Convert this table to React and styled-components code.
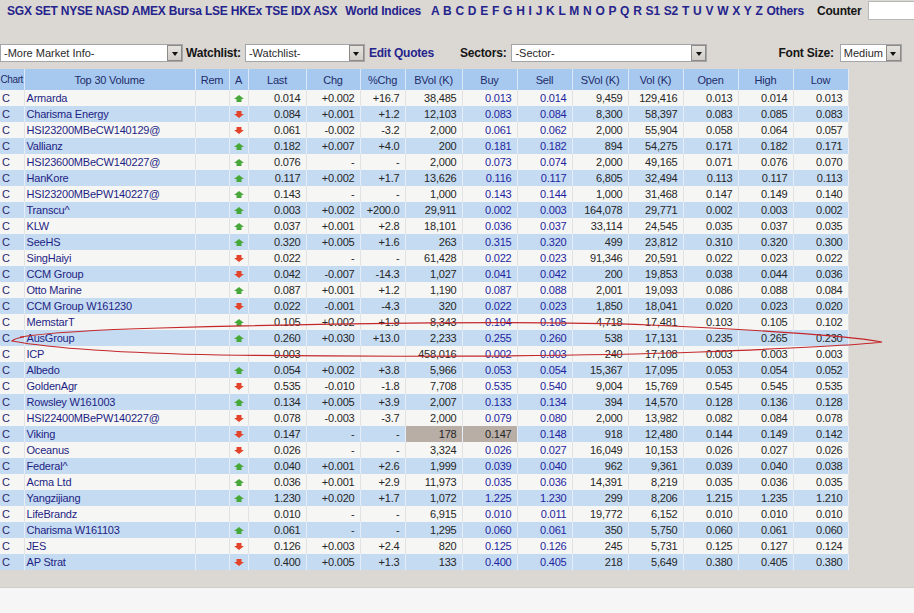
import React from 'react';
import styled, { createGlobalStyle } from 'styled-components';

const Global = createGlobalStyle`
  html, body { margin: 0; padding: 0; background: #f6f6f6; }
  body { font-family: "Liberation Sans", Arial, sans-serif; }
`;

const Page = styled.div`
  position: relative;
  width: 914px;
  height: 613px;
  overflow: hidden;
  display: flex;
  flex-direction: column;
`;

const Main = styled.div`
  background: #dbd7d3;
  height: 587px;
  flex-shrink: 0;
  display: flex;
  flex-direction: column;
`;

const Footer = styled.div`
  flex: 1;
  background: #f6f6f6;
  border-top: 1px solid #d0ccc8;
`;

const NavBar = styled.div`
  display: flex;
  align-items: center;
  height: 21px;
  padding-left: 7px;
  font-size: 12px;
  font-weight: bold;
  letter-spacing: -0.2px;
  white-space: nowrap;
  overflow: hidden;
`;

const NavGroup = styled.div`
  flex-shrink: 0;
  margin-left: ${p => p.$ml || 0}px;
  word-spacing: ${p => p.$ws || 0}px;
`;

const NavLink = styled.span`
  color: #24248c;
`;

const CounterLabel = styled.span`
  flex-shrink: 0;
  margin-left: 13px;
  color: #151515;
`;

const CounterInput = styled.div`
  flex-shrink: 0;
  margin-left: 6px;
  width: 60px;
  height: 17px;
  background: #fff;
  border: 1px solid #b8b8b8;
`;

const Toolbar = styled.div`
  display: flex;
  align-items: center;
  height: 18px;
  margin-top: 23px;
  white-space: nowrap;
`;

const SelectBox = styled.div`
  flex-shrink: 0;
  display: flex;
  align-items: stretch;
  width: ${p => p.$w}px;
  height: 18px;
  box-sizing: border-box;
  margin-left: ${p => p.$ml || 0}px;
  background: #fff;
  border: 1px solid #a2a6ab;
`;

const SelectText = styled.div`
  flex: 1;
  font-size: 11px;
  line-height: 16px;
  padding-left: 3px;
  color: #2a2a2a;
  overflow: hidden;
`;

const DropButton = styled.div`
  width: 15px;
  box-sizing: border-box;
  background: linear-gradient(#e6e4e0, #cfccc7);
  border: 1px solid #8d8a86;
  display: flex;
  align-items: center;
  justify-content: center;
  &::after {
    content: "";
    border-left: 3.5px solid transparent;
    border-right: 3.5px solid transparent;
    border-top: 4px solid #111;
    margin-top: 1px;
  }
`;

const Label = styled.span`
  flex-shrink: 0;
  margin-left: ${p => p.$ml || 0}px;
  font-size: 12px;
  font-weight: bold;
  letter-spacing: -0.2px;
  color: ${p => (p.$link ? '#24248c' : '#151515')};
`;

const Table = styled.table`
  margin-top: 7px;
  width: 848px;
  border-collapse: collapse;
  table-layout: fixed;
  font-size: 11px;
  letter-spacing: -0.2px;
`;

const Th = styled.th`
  height: 21px;
  padding: 0;
  background: #a7c9f0;
  color: #1e2c68;
  font-weight: normal;
  text-align: center;
  border-right: 1px solid #dce8f6;
  white-space: nowrap;
  overflow: hidden;
  font-size: ${p => (p.$tight ? '10px' : '11px')};
  letter-spacing: ${p => (p.$tight ? '-0.4px' : '-0.2px')};
`;

const Tr = styled.tr`
  background: ${p => (p.$alt ? '#c5dbf2' : '#f6f6f4')};
`;

const Td = styled.td`
  height: 16px;
  line-height: 16px;
  padding: 0 ${p => (p.$align === 'right' ? '5px' : '0')} 0 ${p => (p.$align === 'left' ? '2px' : '0')};
  text-align: ${p => p.$align || 'right'};
  white-space: nowrap;
  overflow: hidden;
  color: ${p => p.$color || '#262626'};
  background: ${p => (p.$hl ? '#b9aea6' : 'transparent')};
  border-right: 1px solid ${p => (p.$alt ? '#e4edf8' : '#e2e2e2')};
`;

const ArrowCell = styled.td`
  height: 16px;
  padding: 0;
  text-align: center;
  vertical-align: middle;
  border-right: 1px solid ${p => (p.$alt ? '#e4edf8' : '#e2e2e2')};
  svg { display: block; margin: 0 auto; }
`;

const Overlay = styled.svg`
  position: absolute;
  left: 0;
  top: 0;
  pointer-events: none;
`;

const Arrow = ({ dir }) =>
  dir === 'u' ? (
    <svg width="10" height="7" viewBox="0 0 10 7">
      <polygon points="5,0 10,4 7.5,4 7.5,7 2.5,7 2.5,4 0,4" fill="#47a83a" />
    </svg>
  ) : (
    <svg width="10" height="7" viewBox="0 0 10 7">
      <polygon points="2.5,0 7.5,0 7.5,3 10,3 5,7 0,3 2.5,3" fill="#e3432a" />
    </svg>
  );

const navMain = ['SGX', 'SET', 'NYSE', 'NASD', 'AMEX', 'Bursa', 'LSE', 'HKEx', 'TSE', 'IDX', 'ASX'];
const letters = ['A','B','C','D','E','F','G','H','I','J','K','L','M','N','O','P','Q','R','S1','S2','T','U','V','W','X','Y','Z','Others'];

const cols = [
  { h: 'Chart', w: 24 },
  { h: 'Top 30 Volume', w: 171 },
  { h: 'Rem', w: 34 },
  { h: 'A', w: 19 },
  { h: 'Last', w: 58 },
  { h: 'Chg', w: 54 },
  { h: '%Chg', w: 45 },
  { h: 'BVol (K)', w: 57 },
  { h: 'Buy', w: 55 },
  { h: 'Sell', w: 55 },
  { h: 'SVol (K)', w: 56 },
  { h: 'Vol (K)', w: 55 },
  { h: 'Open', w: 55 },
  { h: 'High', w: 55 },
  { h: 'Low', w: 55 },
];

const rows = [
  ['Armarda','u','0.014','+0.002','+16.7','38,485','0.013','0.014','9,459','129,416','0.013','0.014','0.013'],
  ['Charisma Energy','d','0.084','+0.001','+1.2','12,103','0.083','0.084','8,300','58,397','0.083','0.085','0.083'],
  ['HSI23200MBeCW140129@','d','0.061','-0.002','-3.2','2,000','0.061','0.062','2,000','55,904','0.058','0.064','0.057'],
  ['Vallianz','u','0.182','+0.007','+4.0','200','0.181','0.182','894','54,275','0.171','0.182','0.171'],
  ['HSI23600MBeCW140227@','u','0.076','-','-','2,000','0.073','0.074','2,000','49,165','0.071','0.076','0.070'],
  ['HanKore','u','0.117','+0.002','+1.7','13,626','0.116','0.117','6,805','32,494','0.113','0.117','0.113'],
  ['HSI23200MBePW140227@','u','0.143','-','-','1,000','0.143','0.144','1,000','31,468','0.147','0.149','0.140'],
  ['Transcu^','u','0.003','+0.002','+200.0','29,911','0.002','0.003','164,078','29,771','0.002','0.003','0.002'],
  ['KLW','u','0.037','+0.001','+2.8','18,101','0.036','0.037','33,114','24,545','0.035','0.037','0.035'],
  ['SeeHS','u','0.320','+0.005','+1.6','263','0.315','0.320','499','23,812','0.310','0.320','0.300'],
  ['SingHaiyi','d','0.022','-','-','61,428','0.022','0.023','91,346','20,591','0.022','0.023','0.022'],
  ['CCM Group','d','0.042','-0.007','-14.3','1,027','0.041','0.042','200','19,853','0.038','0.044','0.036'],
  ['Otto Marine','u','0.087','+0.001','+1.2','1,190','0.087','0.088','2,001','19,093','0.086','0.088','0.084'],
  ['CCM Group W161230','d','0.022','-0.001','-4.3','320','0.022','0.023','1,850','18,041','0.020','0.023','0.020'],
  ['MemstarT','u','0.105','+0.002','+1.9','8,343','0.104','0.105','4,718','17,481','0.103','0.105','0.102'],
  ['AusGroup','u','0.260','+0.030','+13.0','2,233','0.255','0.260','538','17,131','0.235','0.265','0.230'],
  ['ICP','','0.003','','','458,016','0.002','0.003','240','17,108','0.003','0.003','0.003'],
  ['Albedo','u','0.054','+0.002','+3.8','5,966','0.053','0.054','15,367','17,095','0.053','0.054','0.052'],
  ['GoldenAgr','d','0.535','-0.010','-1.8','7,708','0.535','0.540','9,004','15,769','0.545','0.545','0.535'],
  ['Rowsley W161003','u','0.134','+0.005','+3.9','2,007','0.133','0.134','394','14,570','0.128','0.136','0.128'],
  ['HSI22400MBePW140227@','d','0.078','-0.003','-3.7','2,000','0.079','0.080','2,000','13,982','0.082','0.084','0.078'],
  ['Viking','d','0.147','-','-','178','0.147','0.148','918','12,480','0.144','0.149','0.142', true],
  ['Oceanus','d','0.026','-','-','3,324','0.026','0.027','16,049','10,153','0.026','0.027','0.026'],
  ['Federal^','u','0.040','+0.001','+2.6','1,999','0.039','0.040','962','9,361','0.039','0.040','0.038'],
  ['Acma Ltd','u','0.036','+0.001','+2.9','11,973','0.035','0.036','14,391','8,219','0.035','0.036','0.035'],
  ['Yangzijiang','u','1.230','+0.020','+1.7','1,072','1.225','1.230','299','8,206','1.215','1.235','1.210'],
  ['LifeBrandz','','0.010','-','-','6,915','0.010','0.011','19,772','6,152','0.010','0.010','0.010'],
  ['Charisma W161103','u','0.061','-','-','1,295','0.060','0.061','350','5,750','0.060','0.061','0.060'],
  ['JES','d','0.126','+0.003','+2.4','820','0.125','0.126','245','5,731','0.125','0.127','0.124'],
  ['AP Strat','d','0.400','+0.005','+1.3','133','0.400','0.405','218','5,649','0.380','0.405','0.380'],
];

const withSpaces = items =>
  items.map((t, i) => (
    <React.Fragment key={t}>
      {i > 0 && ' '}
      <NavLink>{t}</NavLink>
    </React.Fragment>
  ));

const Select = ({ w, ml, text }) => (
  <SelectBox $w={w} $ml={ml}>
    <SelectText>{text}</SelectText>
    <DropButton />
  </SelectBox>
);

export default function App() {
  return (
    <Page>
      <Global />
      <Main>
        <NavBar>
          <NavGroup>{withSpaces(navMain)}</NavGroup>
          <NavGroup $ml={8}><NavLink>World Indices</NavLink></NavGroup>
          <NavGroup $ml={10} $ws={0.8}>{withSpaces(letters)}</NavGroup>
          <CounterLabel>Counter</CounterLabel>
          <CounterInput />
        </NavBar>
        <Toolbar>
          <Select w={183} text="-More Market Info-" />
          <Label $ml={3}>Watchlist:</Label>
          <Select w={120} ml={4} text="-Watchlist-" />
          <Label $ml={4} $link>Edit Quotes</Label>
          <Label $ml={26}>Sectors:</Label>
          <Select w={196} ml={5} text="-Sector-" />
          <Label $ml={71}>Font Size:</Label>
          <Select w={62} ml={6} text="Medium" />
        </Toolbar>
        <Table>
          <colgroup>
            {cols.map(c => <col key={c.h} style={{ width: c.w }} />)}
          </colgroup>
          <thead>
            <tr>
              {cols.map(c => (
                <Th key={c.h} $tight={c.h === 'Chart'}>{c.h}</Th>
              ))}
            </tr>
          </thead>
          <tbody>
            {rows.map((r, i) => {
              const alt = i % 2 === 1;
              const hl = r[13];
              return (
                <Tr key={r[0]} $alt={alt}>
                  <Td $alt={alt} $align="left" $color="#2a2a6e">C</Td>
                  <Td $alt={alt} $align="left" $color="#1e1e84">{r[0]}</Td>
                  <Td $alt={alt} />
                  <ArrowCell $alt={alt}>{r[1] && <Arrow dir={r[1]} />}</ArrowCell>
                  <Td $alt={alt} $align="right">{r[2]}</Td>
                  <Td $alt={alt} $align="right">{r[3]}</Td>
                  <Td $alt={alt} $align="right">{r[4]}</Td>
                  <Td $alt={alt} $align="right" $hl={hl}>{r[5]}</Td>
                  <Td $alt={alt} $align="right" $hl={hl} $color={hl ? '#262626' : '#1f1fa0'}>{r[6]}</Td>
                  <Td $alt={alt} $align="right" $color="#1f1fa0">{r[7]}</Td>
                  <Td $alt={alt} $align="right">{r[8]}</Td>
                  <Td $alt={alt} $align="right">{r[9]}</Td>
                  <Td $alt={alt} $align="right">{r[10]}</Td>
                  <Td $alt={alt} $align="right">{r[11]}</Td>
                  <Td $alt={alt} $align="right">{r[12]}</Td>
                </Tr>
              );
            })}
          </tbody>
        </Table>
      </Main>
      <Footer />
      <Overlay width="914" height="613" viewBox="0 0 914 613">
        <path
          d="M20,337 C40,334 90,330 160,328 C300,324 520,320 650,325 C760,330 850,336 882,342 C860,345 800,348 700,352 C560,357 360,357 220,355 C120,353 50,348 12,341 C14,339 17,338 24,337"
          fill="none"
          stroke="#c4272a"
          strokeWidth="1.2"
        />
      </Overlay>
    </Page>
  );
}
